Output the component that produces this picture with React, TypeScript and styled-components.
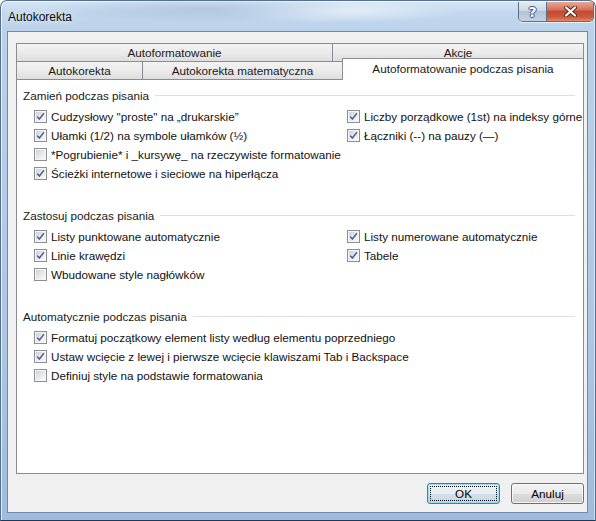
import React from 'react'
import styled, { createGlobalStyle } from 'styled-components'

const GlobalStyle = createGlobalStyle`
  html, body {
    margin: 0;
    padding: 0;
    background: #ffffff;
  }
  body {
    font-family: 'Liberation Sans', Arial, sans-serif;
    font-size: 11.7px;
    color: #000000;
  }
`

const Window = styled.div`
  width: 596px;
  height: 521px;
  box-sizing: border-box;
  display: flex;
  flex-direction: column;
  border: 1px solid #55708e;
  border-bottom-color: #1f3956;
  border-radius: 7px 7px 0 0;
  background: linear-gradient(
    180deg,
    #d6e5f4 0%,
    #c3d8ee 12px,
    #b9d1ea 31px,
    #aec8e4 60%,
    #9fbcdd 100%
  );
  box-shadow: inset 1px 1px 0 rgba(255, 255, 255, 0.7),
    inset -1px 0 0 rgba(255, 255, 255, 0.5);
  overflow: hidden;
`

const TitleBar = styled.div`
  height: 30px;
  flex: none;
  display: flex;
  align-items: flex-start;
  justify-content: space-between;
  background: radial-gradient(
      ellipse 160px 14px at 200px 8px,
      rgba(150, 175, 205, 0.45),
      rgba(150, 175, 205, 0) 100%
    ),
    radial-gradient(
      ellipse 120px 12px at 340px 10px,
      rgba(235, 243, 251, 0.8),
      rgba(235, 243, 251, 0) 100%
    );
`

const Title = styled.div`
  padding: 9px 0 0 7px;
  font-size: 12px;
  line-height: 15px;
  color: #0b0b0b;
  text-shadow: 0 0 6px rgba(255, 255, 255, 0.9);
`

const Controls = styled.div`
  display: flex;
  margin: 1px 1px 0 0;
  border: 1px solid #5b6f86;
  border-top: none;
  border-radius: 0 0 5px 5px;
  overflow: hidden;
  box-shadow: 0 1px 0 rgba(255, 255, 255, 0.6);
`

const HelpButton = styled.div`
  width: 27px;
  height: 19px;
  display: flex;
  align-items: center;
  justify-content: center;
  border-right: 1px solid #5b6f86;
  background: linear-gradient(180deg, #e4ebf3 0%, #cdd8e5 45%, #b3c3d6 50%, #c4d3e3 100%);
  color: #ffffff;
  font-family: 'DejaVu Sans', sans-serif;
  font-weight: bold;
  font-size: 14px;
  text-shadow: -1px 0 #3d4f66, 1px 0 #3d4f66, 0 -1px #3d4f66, 0 1px #3d4f66;
`

const CloseButton = styled.div`
  width: 46px;
  height: 19px;
  display: flex;
  align-items: center;
  justify-content: center;
  background: linear-gradient(180deg, #e7a796 0%, #d6725e 40%, #c44a32 50%, #cc5a3d 80%, #e08a6a 100%);
`

const Client = styled.div`
  flex: 1;
  margin: 0 7px 7px 6px;
  padding: 11px 4px 0 8px;
  display: flex;
  flex-direction: column;
  background: #f0f0f0;
  border: 1px solid #6f89a8;
`

const TabRow = styled.div`
  display: flex;
  height: 18px;
`

const Tab = styled.div<{ $w: number; $selected?: boolean }>`
  width: ${({ $w }) => $w}px;
  flex: none;
  box-sizing: border-box;
  display: flex;
  align-items: center;
  justify-content: center;
  border: 1px solid #898c95;
  border-bottom: none;
  color: #1a1a1a;
  & + & {
    margin-left: -1px;
  }
  background: ${({ $selected }) =>
    $selected ? '#ffffff' : 'linear-gradient(180deg, #f3f3f3 0%, #ebebeb 50%, #dedede 100%)'};
  ${({ $selected }) =>
    $selected
      ? `
    height: 22px;
    margin-top: -3px;
    position: relative;
    z-index: 1;
    padding-bottom: 2px;
  `
      : ''}
`

const Panel = styled.div`
  width: 568px;
  height: 395px;
  box-sizing: border-box;
  background: #ffffff;
  border: 1px solid #898c95;
  padding: 8px 8px 0 6px;
`

const Group = styled.div`
  margin-bottom: 25px;
`

const GroupHead = styled.div`
  display: flex;
  align-items: center;
  gap: 6px;
  height: 15px;
  line-height: 15px;
  margin-bottom: 4px;
  color: #1a1a1a;
  &::after {
    content: '';
    flex: 1;
    height: 1px;
    background: #dde1e6;
  }
`

const Options = styled.div`
  display: grid;
  grid-template-columns: 313px 1fr;
  grid-auto-rows: 19px;
  padding-left: 11px;
`

const Option = styled.label`
  display: flex;
  align-items: center;
  gap: 4px;
  white-space: nowrap;
  color: #111111;
`

const Box = styled.span`
  flex: none;
  width: 13px;
  height: 13px;
  box-sizing: border-box;
  border: 1px solid #8e8f8f;
  padding: 1px;
  background: #f6f6f6;
  display: flex;
`

const BoxFill = styled.span`
  flex: 1;
  display: flex;
  align-items: center;
  justify-content: center;
  background: linear-gradient(135deg, #cdd1d6 0%, #e6e8ea 50%, #f8f8f8 100%);
`

const Footer = styled.div`
  width: 568px;
  display: flex;
  justify-content: flex-end;
  gap: 11px;
  margin-top: 9px;
`

const Button = styled.div<{ $default?: boolean }>`
  width: 73px;
  height: 21px;
  box-sizing: border-box;
  padding: 2px;
  display: flex;
  border: 1px solid ${({ $default }) => ($default ? '#3c7fb1' : '#707070')};
  border-radius: 3px;
  background: ${({ $default }) =>
    $default
      ? 'linear-gradient(180deg, #eef3f7 0%, #e6edf3 50%, #d6e0e9 50%, #cad7e3 100%)'
      : 'linear-gradient(180deg, #f2f2f2 0%, #ebebeb 50%, #dddddd 50%, #cfcfcf 100%)'};
  box-shadow: inset 0 0 0 1px
    ${({ $default }) => ($default ? 'rgba(150, 215, 245, 0.9)' : 'rgba(255, 255, 255, 0.75)')};
`

const ButtonLabel = styled.span<{ $focus?: boolean }>`
  flex: 1;
  display: flex;
  align-items: center;
  justify-content: center;
  border: 1px dotted ${({ $focus }) => ($focus ? '#000000' : 'transparent')};
  color: #000000;
`

type Item = { label: string; checked: boolean }

const groups: { title: string; rows: Item[][] }[] = [
  {
    title: 'Zamień podczas pisania',
    rows: [
      [
        { label: 'Cudzysłowy "proste" na „drukarskie”', checked: true },
        { label: 'Liczby porządkowe (1st) na indeksy górne', checked: true },
      ],
      [
        { label: 'Ułamki (1/2) na symbole ułamków (½)', checked: true },
        { label: 'Łączniki (--) na pauzy (—)', checked: true },
      ],
      [{ label: '*Pogrubienie* i _kursywę_ na rzeczywiste formatowanie', checked: false }],
      [{ label: 'Ścieżki internetowe i sieciowe na hiperłącza', checked: true }],
    ],
  },
  {
    title: 'Zastosuj podczas pisania',
    rows: [
      [
        { label: 'Listy punktowane automatycznie', checked: true },
        { label: 'Listy numerowane automatycznie', checked: true },
      ],
      [
        { label: 'Linie krawędzi', checked: true },
        { label: 'Tabele', checked: true },
      ],
      [{ label: 'Wbudowane style nagłówków', checked: false }],
    ],
  },
  {
    title: 'Automatycznie podczas pisania',
    rows: [
      [{ label: 'Formatuj początkowy element listy według elementu poprzedniego', checked: true }],
      [{ label: 'Ustaw wcięcie z lewej i pierwsze wcięcie klawiszami Tab i Backspace', checked: true }],
      [{ label: 'Definiuj style na podstawie formatowania', checked: false }],
    ],
  },
]

const Checkbox = ({ checked }: { checked: boolean }) => (
  <Box>
    <BoxFill>
      {checked && (
        <svg width="9" height="9" viewBox="0 0 9 9">
          <path d="M1.2 4.6 L3.4 7 L7.9 1.3" fill="none" stroke="#ffffff" strokeWidth="2.6" />
          <path d="M1.2 4.6 L3.4 7 L7.9 1.3" fill="none" stroke="#4a5f97" strokeWidth="1.6" />
        </svg>
      )}
    </BoxFill>
  </Box>
)

export default function App() {
  return (
    <>
      <GlobalStyle />
      <Window>
        <TitleBar>
          <Title>Autokorekta</Title>
          <Controls>
            <HelpButton>?</HelpButton>
            <CloseButton>
              <svg width="13" height="11" viewBox="0 0 13 11">
                <path d="M2 1.5 L11 9.5 M11 1.5 L2 9.5" stroke="#5a2418" strokeWidth="4" strokeLinecap="round" />
                <path d="M2 1.5 L11 9.5 M11 1.5 L2 9.5" stroke="#ffffff" strokeWidth="2.2" strokeLinecap="round" />
              </svg>
            </CloseButton>
          </Controls>
        </TitleBar>
        <Client>
          <TabRow>
            <Tab $w={317}>Autoformatowanie</Tab>
            <Tab $w={252}>Akcje</Tab>
          </TabRow>
          <TabRow>
            <Tab $w={127}>Autokorekta</Tab>
            <Tab $w={201}>Autokorekta matematyczna</Tab>
            <Tab $w={242} $selected>
              Autoformatowanie podczas pisania
            </Tab>
          </TabRow>
          <Panel>
            {groups.map((group) => (
              <Group key={group.title}>
                <GroupHead>{group.title}</GroupHead>
                <Options>
                  {group.rows.map((row, i) => (
                    <React.Fragment key={i}>
                      {row.map((item) => (
                        <Option key={item.label}>
                          <Checkbox checked={item.checked} />
                          {item.label}
                        </Option>
                      ))}
                      {row.length === 1 && <span />}
                    </React.Fragment>
                  ))}
                </Options>
              </Group>
            ))}
          </Panel>
          <Footer>
            <Button $default>
              <ButtonLabel $focus>OK</ButtonLabel>
            </Button>
            <Button>
              <ButtonLabel>Anuluj</ButtonLabel>
            </Button>
          </Footer>
        </Client>
      </Window>
    </>
  )
}
